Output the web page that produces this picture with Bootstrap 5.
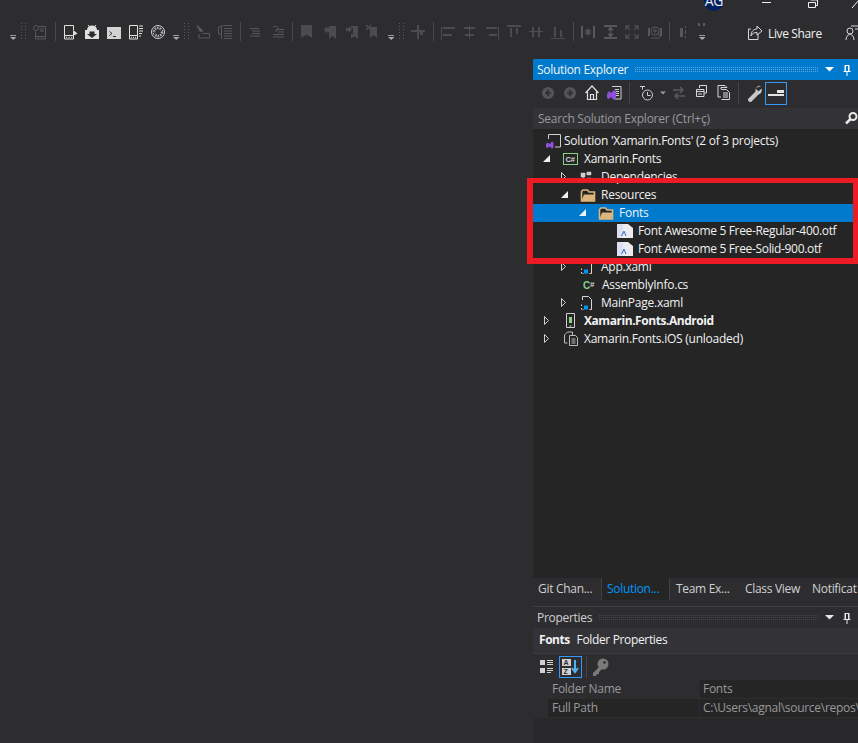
<!DOCTYPE html>
<html lang="en"><head><meta charset="utf-8"><title>Solution Explorer</title>
<link href="https://cdn.jsdelivr.net/npm/bootstrap@5.3.0/dist/css/bootstrap.min.css" rel="stylesheet">
<style>
html,body{height:100%;margin:0;background:#2d2d30;overflow:hidden}
body{font-family:"Open Sans","Liberation Sans",sans-serif;font-size:12px;color:#f1f1f1;line-height:18px}
.ide-shell{width:858px;height:743px;position:relative;overflow:hidden}
.cap-bar{height:12px;overflow:hidden}
.avatar-dot{width:20px;height:20px;border-radius:50%;background:#002060;margin-top:-9px;margin-left:704px;font-size:14px;line-height:20px;text-align:center;color:#e8e8e8;flex:none;letter-spacing:-.3px;white-space:nowrap}
.win-glyph{display:block;flex:none}
.tool-strip{height:47px;padding-top:13px;padding-left:10px}
.tool-strip svg{display:block;flex:none;overflow:visible}
.share-text{font-size:12px;color:#f1f1f1;line-height:16px;margin-top:1px;width:78px;flex:none;letter-spacing:-.36px}
.main-split{height:684px}
.editor-void{width:533px;flex:none}
.side-col{width:325px;flex:none;min-width:0}
.title-blue{height:21px;background:#007acc;color:#f4f4f4;padding-left:4px}
.title-label{line-height:21px;white-space:nowrap;letter-spacing:-.3px}
.grip-dots{height:5px;flex:1;margin:0 7px 0 7px;background-image:radial-gradient(circle at .5px .5px,#59a8df 0.6px,transparent .7px);background-size:2px 2px}
.grip-gray{background-image:radial-gradient(circle at .5px .5px,#46464a .6px,transparent .7px)}
.se-tools{height:27px;padding-left:9px}
.se-tools svg{display:block;flex:none}
.tool-sep{width:1px;height:22px;background:#46464a;flex:none}
.sel-btn{width:22px;height:23px;border:1px solid #3399ff;flex:none;display:flex;align-items:center;justify-content:center}
.search-bar{height:21px;margin-top:1px;background:#333337;color:#999;padding-left:5px;line-height:21px;letter-spacing:-.25px}
.tree-pane{height:450px;background:#252526;padding-top:3px}
.tree-row{height:18px;line-height:18px;white-space:nowrap;color:#f1f1f1;display:flex;align-items:center;letter-spacing:-.25px}
.tree-row.is-sel{background:#007acc}
.tree-row.is-bold{font-weight:700;letter-spacing:-.45px}
.tree-row.is-tight{letter-spacing:-.33px}
.ic{width:18px;height:16px;flex:none;display:block}
.red-frame{position:absolute;left:527px;top:178px;width:332px;height:86px;border:6px solid #ed1c24;border-top-width:5px;pointer-events:none}
.tab-strip{height:22px;background:#2d2d30}
.tab-item{padding:0 0 0 5px;line-height:21px;color:#d0d0d0;white-space:nowrap;height:22px;letter-spacing:-.3px;flex:none}
.tab-on{background:#252526;color:#0097fb;border:1px solid #3f3f46;border-bottom:0;border-top:0}
.prop-wrap{border-top:1px solid #3f3f46;margin-top:6px;height:137px;background:#29292b}
.prop-title{height:21px;color:#d0d0d0;padding-left:4px;background:#2d2d30}
.prop-head{height:25px;background:#333337;padding-left:6px;line-height:23px;color:#f1f1f1;white-space:nowrap;letter-spacing:-.35px}
.prop-head b{font-weight:700;margin-right:4px;letter-spacing:-.45px}
.prop-tools{height:27px;padding-left:6px;background:#2d2d30;border-top:1px solid #3a3a3e}
.prop-tools svg{display:block;flex:none}
.grid-row{height:19px;line-height:18px;color:#999;white-space:nowrap;overflow:hidden;border-bottom:1px solid #2d2d30;letter-spacing:-.28px}
.gutter{width:15px;flex:none;background:#2d2d30}
.name-cell{width:151px;flex:none;padding-left:4px}
.name-lite{background:#2d2d30}
.name-dark{background:#252526}
.val-cell{flex:1;padding-left:3px;border-left:1px solid #2d2d30;background:#252526}
</style></head>
<body>
<svg width="0" height="0" class="position-absolute">
<defs>
<g id="g-open"><path d="M1.500 14V4.500l1.500-1.500h4.500l1.500 2h5.500v9z" fill="#252526" stroke="#dcb67a" stroke-width="1.600"/><path d="M1.500 14 4 7.500h11l-1.500 6.500z" fill="#dcb67a"/></g>
<g id="g-fa"><path d="M0 1h11l5 4v10H0z" fill="#ececf0"/><path d="M0 1h6v14H0z" fill="#d5dcef" opacity=".7"/><path d="M4 13l2.500-5h1l2 5h-1l-1.500-3.500L5 13z" fill="#3d6fc4"/></g>
<g id="g-xaml"><path d="M3.500 5V1.500h6l3 3V14.500h-2M3.500 14.500h1" fill="none" stroke="#d8d8d8"/><path d="M5 10.500h4v4H5z" fill="#0097fb"/><path d="M2.500 9.500v1.500M2.500 13v1.500" stroke="#d8d8d8"/></g>
<g id="g-tri-o"><path d="M0.500 0.500 4.500 4.500 0.500 8.500z" fill="none" stroke="#d0d0d0"/></g>
<g id="g-tri-f"><path d="M7 0V7H0z" fill="#f1f1f1"/></g>
<g id="g-drop"><path d="M0 10.500H6" stroke="#9a9a9a"/><path d="M0 12h6.500L3.250 15z" fill="#a8a8a8"/></g>
<g id="g-grip"><path d="M.5 -2V16M4.500 -2V16" stroke="#5a5a5e" stroke-dasharray="1 2"/></g>
<g id="g-vline"><path d="M.5 -3V16" stroke="#4a4a4e"/></g>
</defs></svg>
<div class="ide-shell">
  <div class="cap-bar d-flex">
    <div class="avatar-dot">AG</div>
    <svg class="win-glyph" width="134" height="12"><path d="M38 2.500H47" stroke="#f1f1f1"/><path d="M86.500 0h7v5.500h-2" fill="none" stroke="#f1f1f1"/><path d="M84.500 2.500h7v5h-7z" fill="none" stroke="#f1f1f1"/><path d="M128 8 134 1" stroke="#f1f1f1" fill="none"/></svg>
  </div>
  <div class="tool-strip d-flex">
    <svg width="11" height="20"><use href="#g-drop"/></svg>
    <svg width="12" height="20"><use href="#g-grip"/></svg>
    <svg width="22" height="20" fill="none" stroke="#58585c"><path d="M2.500 6.500v7.500h10V1.500H6M2.500 11.500h10M5 12.800h1M8 12.800h1"/><circle cx="3" cy="3" r="2.500"/><path d="M7 4h4M7 6h4"/></svg>
    <svg width="9" height="20"><use href="#g-vline"/></svg>
    <svg width="21" height="20" fill="none" stroke="#e0e0e0"><path d="M9.500 5V.5H.5v13.500h9V11M.5 10.500h9M2 12.300h1.200M4.500 12.300h1.200M7 12.300h1.200"/><path d="M9 5l4.500 3.500L9 11z" fill="#e0e0e0" stroke="none"/></svg>
    <svg width="22" height="20"><path d="M0 5h14v9H0z" fill="#e0e0e0"/><path d="M2 5a5 4.500 0 0 1 10 0z" fill="#e0e0e0"/><path d="M3 0l1.500 2M11 0 9.500 2" stroke="#e0e0e0"/><path d="M4.500 6.500h5v2.500h2.500L7 13 2 9h2.500z" fill="#2d2d30"/></svg>
    <svg width="22" height="20"><path d="M0 2h14v12H0z" fill="#d2d2d2"/><path d="M2.500 6.500 5 8.500l-2.500 2M6 11.500h3" fill="none" stroke="#2d2d30"/></svg>
    <svg width="22" height="20" fill="none" stroke="#e0e0e0"><path d="M.5.500h8v13.500h-8zM.5 10.500h8"/><path d="M2 12.300h1M4 12.300h1M6 12.300h1"/><path d="M10 1h4M10 3.500h4M10 6h4M10 8.500h3M10 11h2" stroke-width="1.200"/></svg>
    <svg width="22" height="20" fill="none" stroke="#d2d2d2"><circle cx="7" cy="7" r="6.500"/><circle cx="7" cy="7" r="4" stroke-width="2.500" stroke-dasharray="1.500 1" stroke="#b0b0b0"/><path d="M3 9l3-3 2 2 3-3" stroke="#2d2d30"/></svg>
    <svg width="11" height="20"><use href="#g-drop"/></svg>
    <svg width="13" height="20"><use href="#g-grip"/></svg>
    <svg width="21" height="20" fill="none" stroke="#58585c"><path d="M0 0l6 6-3 .500z" fill="#58585c"/><path d="M5 8.500h7.500v4.500H2V9"/></svg>
    <svg width="22" height="20" fill="none" stroke="#58585c"><path d="M3.500 2H.5v7h3M3.500 0v14M5 .5h9M6 3.500h8M6 6h8M6 8.500h8M6 11h8M6 13.500h8"/></svg>
    <svg width="10" height="20"><use href="#g-vline"/></svg>
    <svg width="22" height="20" stroke="#58585c"><path d="M0 3.500h9M2 6h8M2 8.500h8M0 11h10"/></svg>
    <svg width="20" height="20" fill="none" stroke="#58585c"><path d="M1 2.500a2.500 2 0 1 1 3 2.500v2M5 4.500h7M6 7h6M1 9.500h11M1 12h11"/></svg>
    <svg width="9" height="20"><use href="#g-vline"/></svg>
    <svg width="23" height="20"><path d="M0 0h11v13L5.500 9.500 0 13z" fill="#4c4c50"/></svg>
    <svg width="22" height="20"><path d="M5 1h7v13l-3.500-3L5 14V7H3v2L0 4.500 3 1v2h2z" fill="#4c4c50"/></svg>
    <svg width="20" height="20"><path d="M0 3h3V1l3 3.500L3 8V6H0zM5 1h7v13l-3.500-3L5 14V9h2V3H5z" fill="#4c4c50"/></svg>
    <svg width="22" height="20"><path d="M4 2h7v11l-3.500-3L4 13z" fill="#4c4c50"/><path d="M0 0l5 5M5 0 0 5" stroke="#4c4c50" stroke-width="1.500"/></svg>
    <svg width="11" height="20"><use href="#g-drop"/></svg>
    <svg width="12" height="20"><use href="#g-grip"/></svg>
    <svg width="22" height="20"><path d="M0 5h14v2H0zM6 0h2v14H6zM9 7h3v3H9z" fill="#4c4c50"/></svg>
    <svg width="8" height="20"><use href="#g-vline"/></svg>
    <svg width="23" height="20" fill="#4c4c50"><path d="M0 2h1v13H0zM2 2h12v2H2zM2 9h9v2H2z"/></svg>
    <svg width="22" height="20" fill="#4c4c50"><path d="M5 0h1v14H5zM0 2h11v2H0zM1 9h9v2H1z"/></svg>
    <svg width="21" height="20" fill="#4c4c50"><path d="M12 2h1v13h-1zM0 2h11v2H0zM3 9h8v2H3z"/></svg>
    <svg width="22" height="20" fill="#4c4c50"><path d="M0 0h14v2H0zM3 3h2v9H3zM9 3h2v6H9z"/></svg>
    <svg width="22" height="20" fill="#4c4c50"><path d="M0 6h14v1H0zM3 2h2v10H3zM9 2h2v10H9z"/></svg>
    <svg width="22" height="20" fill="#4c4c50"><path d="M0 13h14v1H0zM3 2h2v10H3zM9 5h2v7H9z"/></svg>
    <svg width="8" height="20"><use href="#g-vline"/></svg>
    <svg width="23" height="20" fill="none" stroke="#58585c"><path d="M1 1v12M13 1v12" stroke-width="2"/><path d="M7 3.500v7M4 5l6 4M10 5 4 9" stroke-width="1.500"/></svg>
    <svg width="21" height="20" fill="none" stroke="#58585c"><path d="M0 1h13M0 13h13" stroke-width="2"/><path d="M6.500 2v10"/><path d="M4 5l2.500-3L9 5zM4 9l2.500 3L9 9z" fill="#58585c"/></svg>
    <svg width="23" height="20" fill="none" stroke="#4c4c50" stroke-width="1.500"><path d="M1 5V1h4M9 1h4v4M13 9v4H9M5 13H1V9M2 2l3 3M12 2 9 5M2 12l3-3M12 12 9 9"/></svg>
    <svg width="21" height="20" fill="none" stroke="#58585c"><path d="M1 3v8M13 3v8" stroke-width="2"/><circle cx="7" cy="6" r="4"/><path d="M3 13h9M10 9l3 3M5 6h4M7 4v4"/></svg>
    <svg width="10" height="20"><use href="#g-vline"/></svg>
    <svg width="19" height="20" fill="#58585c"><path d="M1 3h3v9H1zM6 1h1v2H6zM6 5h1v4H6zM6 11h1v2H6z"/></svg>
    <svg width="50" height="20"><path d="M1 -2v3M6 -2v3" stroke="#8a8a8a"/><path d="M1 10.500H7" stroke="#9a9a9a"/><path d="M1 12h6.500L4.250 15z" fill="#a8a8a8"/></svg>
    <svg width="20" height="20" fill="none" stroke="#d8d8d8"><path d="M10 9v5.500H.5V4H3"/><path d="M3 11c0-5 3-7 6-7V1l5 5-5 4V7.500c-3 0-5 1-6 3.500z"/></svg>
    <span class="share-text">Live Share</span>
    <svg width="14" height="20" fill="none" stroke="#d8d8d8"><circle cx="4" cy="6" r="3"/><path d="M0 15c0-3 1.500-5 4-6 2.500 1 4 3 4 6M5 1h8M9 4h5"/></svg>
  </div>
  <div class="main-split d-flex">
    <div class="editor-void"></div>
    <div class="side-col d-flex flex-column">
      <div class="title-blue d-flex align-items-center">
        <span class="title-label">Solution Explorer</span>
        <span class="grip-dots"></span>
        <svg width="33" height="12" viewBox="0 0 33 12" class="flex-none"><path d="M0 3h9L4.500 7.500z" fill="#fff"/><path d="M19.500 1h5v6h1v1h-3v4h-1V8h-3V7h1z" fill="#fff"/><path d="M21 2h2v5h-2z" fill="#007acc"/><path d="M23 2h1v5h-1z" fill="#fff"/></svg>
      </div>
      <div class="se-tools d-flex align-items-center">
        <svg width="22" height="22" viewBox="0 0 22 22"><circle cx="6" cy="11" r="6" fill="#555558"/><path d="M7 8 4 11l3 3M4 11h5" stroke="#2d2d30" fill="none" stroke-width="1.500"/></svg>
        <svg width="21" height="22" viewBox="0 0 21 22"><circle cx="6" cy="11" r="6" fill="#555558"/><path d="M5 8l3 3-3 3M3 11h5" stroke="#2d2d30" fill="none" stroke-width="1.500"/></svg>
        <svg width="22" height="22" viewBox="0 0 22 22" fill="none" stroke="#e0e0e0" stroke-width="1.200"><path d="M.5 11 7 4l6.500 7M2.500 9.500v8h9v-8M5.500 17.500V12.500h3v5"/></svg>
        <svg width="22" height="22" viewBox="0 0 22 22"><path d="M5 4.500h9V17H8" fill="none" stroke="#d0d0d0"/><path d="M8 7.500h4M8 9.500h4M8 11.500h4M8 13.500h4" stroke="#d0d0d0"/><path d="M0 12v4l2 1 2-2 3 3 2-1V9L7 8l-3 3-2-2z" fill="#8f4fd8"/></svg>
        <div class="tool-sep me-2 pe-0"></div>
        <svg width="0" height="0"/>
        <svg width="2" height="22"/>
        <svg width="20" height="22" viewBox="0 0 20 22" fill="none" stroke="#d0d0d0"><path d="M0 4.500h5M2.500 4.500v3"/><circle cx="7.500" cy="13" r="5"/><path d="M7.500 10v3.500h3"/></svg>
        <svg width="13" height="22" viewBox="0 0 13 22"><path d="M0 9.500h6L3 12.500z" fill="#9a9a9a"/></svg>
        <svg width="23" height="22" viewBox="0 0 23 22" fill="none" stroke="#5a5a5e" stroke-width="1.500"><path d="M0 8h10M7 5l3 3-3 3M12 14H2M5 11l-3 3 3 3"/></svg>
        <svg width="20" height="22" viewBox="0 0 20 22" fill="none" stroke="#d8d8d8"><path d="M3.500 6V3.500h7V11H8"/><path d="M.5 7.500h7.500v7H.5zM.5 9.500h7.500"/><path d="M2 12h4"/></svg>
        <svg width="22" height="22" viewBox="0 0 22 22" fill="none" stroke="#d8d8d8"><path d="M2 7V3.500h7l2 2H5v2"/><path d="M5.500 7.500h5l3 3v7h-8M2 7v8h3"/><path d="M7 11h5M7 13h5M7 15h5"/></svg>
        <div class="tool-sep me-2"></div>
        <svg width="18" height="22" viewBox="0 0 18 22"><path d="M14 4a4.500 4.500 0 0 0-5.500 5.500L1 17v1.500L2.500 20H4l7.500-7.500A4.500 4.500 0 0 0 14.500 6.500L12 9l-2.500-1L9 6z" fill="#c8c8c8"/></svg>
        <div class="sel-btn"><svg width="16" height="8" viewBox="0 0 16 8"><path d="M0 5h16v2H0zM9 1h7v3H9z" fill="#e4e4e4"/></svg></div>
      </div>
      <div class="search-bar d-flex justify-content-between">
        <span>Search Solution Explorer (Ctrl+ç)</span>
        <svg width="13" height="21" viewBox="0 0 13 21" class="flex-none"><circle cx="8" cy="8.500" r="3.500" fill="none" stroke="#e8e8e8" stroke-width="2"/><path d="M5.500 11 1 15.500" stroke="#e8e8e8" stroke-width="2.500"/></svg>
      </div>
      <div class="tree-pane">
        <div class="tree-row" style="padding-left:13px"><svg class="ic me-0" viewBox="0 0 18 16" style="margin-right:2px"><path d="M2.500 6V1.500h12V14H9" fill="none" stroke="#d0d0d0"/><path d="M0 11v3l1.500 1 2-1.500 2.500 2 1.500-1V9.500L6 8.500 3.500 11l-2-1.500z" fill="#8f4fd8"/></svg><span class="ms-0" style="margin-left:2px">Solution 'Xamarin.Fonts' (2 of 3 projects)</span></div>
        <div class="tree-row" style="padding-left:10px"><svg width="7" height="7" class="flex-none" style="margin-right:13px"><use href="#g-tri-f"/></svg><svg class="ic" viewBox="0 0 18 16" style="margin-right:3px"><rect x=".5" y="2.500" width="14" height="11" fill="none" stroke="#89d185"/><text x="2.500" y="11" font-size="7.500" font-family="Liberation Sans" fill="#d8d8d8" font-weight="700">C#</text></svg>Xamarin.Fonts</div>
        <div class="tree-row" style="padding-left:28px"><svg width="5" height="9" class="flex-none" style="margin-right:13px"><use href="#g-tri-o"/></svg><svg class="ic" viewBox="0 0 18 16" style="margin-right:4px"><path d="M2 4h4v4H2zM8 3h4v3H8zM8 9h4v3H8zM6 5h2M4 8v3h4" fill="#d0d0d0" stroke="#d0d0d0" stroke-width=".5"/></svg>Dependencies</div>
        <div class="tree-row" style="padding-left:28px"><svg width="7" height="7" class="flex-none" style="margin-right:12px"><use href="#g-tri-f"/></svg><svg class="ic" viewBox="0 0 18 16" style="margin-right:2px"><use href="#g-open"/></svg><span style="margin-left:1px">Resources</span></div>
        <div class="tree-row is-sel" style="padding-left:46px"><svg width="7" height="7" class="flex-none" style="margin-right:12px"><use href="#g-tri-f"/></svg><svg class="ic" viewBox="0 0 18 16" style="margin-right:2px"><use href="#g-open"/></svg><span style="margin-left:1px">Fonts</span></div>
        <div class="tree-row is-tight" style="padding-left:84px"><svg class="ic" viewBox="0 0 18 16" style="margin-right:3px"><use href="#g-fa"/></svg>Font Awesome 5 Free-Regular-400.otf</div>
        <div class="tree-row is-tight" style="padding-left:84px"><svg class="ic" viewBox="0 0 18 16" style="margin-right:3px"><use href="#g-fa"/></svg>Font Awesome 5 Free-Solid-900.otf</div>
        <div class="tree-row" style="padding-left:28px"><svg width="5" height="9" class="flex-none" style="margin-right:13px"><use href="#g-tri-o"/></svg><svg class="ic" viewBox="0 0 18 16" style="margin-right:4px"><use href="#g-xaml"/></svg>App.xaml</div>
        <div class="tree-row" style="padding-left:50px"><svg class="ic" viewBox="0 0 18 16" style="margin-right:1px"><text x="0" y="12" font-size="10" font-family="Liberation Sans" fill="#89d185" font-weight="700">C</text><text x="7" y="10" font-size="8" font-family="Liberation Sans" fill="#d8d8d8" font-weight="700">#</text></svg>AssemblyInfo.cs</div>
        <div class="tree-row" style="padding-left:28px"><svg width="5" height="9" class="flex-none" style="margin-right:13px"><use href="#g-tri-o"/></svg><svg class="ic" viewBox="0 0 18 16" style="margin-right:4px"><use href="#g-xaml"/></svg>MainPage.xaml</div>
        <div class="tree-row is-bold" style="padding-left:11px"><svg width="5" height="9" class="flex-none" style="margin-right:14px"><use href="#g-tri-o"/></svg><svg class="ic" viewBox="0 0 18 16" style="margin-right:3px"><path d="M3.500 .500h8v14h-8z" fill="none" stroke="#d0d0d0"/><path d="M5 3h5v8H5z" fill="#2a2a2a"/><path d="M6 4h3v6H6z" fill="#89d185"/><path d="M6.500 13h2" stroke="#d0d0d0"/></svg>Xamarin.Fonts.Android</div>
        <div class="tree-row" style="padding-left:11px"><svg width="5" height="9" class="flex-none" style="margin-right:14px"><use href="#g-tri-o"/></svg><svg class="ic" viewBox="0 0 18 16" style="margin-right:3px"><path d="M4.500 12H1.500V4l3-3h5v3M6.500 4.500h6l2 2v8h-8z" fill="none" stroke="#bdbdbd"/><path d="M8.500 8h4M8.500 10h4M8.500 12h4" stroke="#bdbdbd"/></svg>Xamarin.Fonts.iOS (unloaded)</div>
      </div>
      <div class="tab-strip d-flex">
        <div class="tab-item" style="width:68px">Git Chan...</div>
        <div class="tab-item tab-on" style="width:69px">Solution...</div>
        <div class="tab-item" style="padding-left:6px;width:75px">Team Ex...</div>
        <div class="tab-item" style="width:60px;padding-left:0">Class View</div>
        <div class="tab-item ps-0" style="margin-left:7px">Notificat</div>
      </div>
      <div class="prop-wrap">
        <div class="prop-title d-flex align-items-center">
          <span class="title-label">Properties</span>
          <span class="grip-dots grip-gray"></span>
          <svg width="33" height="12" viewBox="0 0 33 12" class="flex-none"><path d="M0 3h9L4.500 7.500z" fill="#e8e8e8"/><path d="M19.500 1h5v6h1v1h-3v4h-1V8h-3V7h1z" fill="#e8e8e8"/><path d="M21 2h2v5h-2z" fill="#2d2d30"/></svg>
        </div>
        <div class="prop-head"><b>Fonts</b> Folder Properties</div>
        <div class="prop-tools d-flex align-items-center">
          <svg width="20" height="22" viewBox="0 0 20 22" fill="#d0d0d0"><path d="M1 4h5v5H1zM1 12h5v5H1zM8 4h6v1H8zM8 6h6v1H8zM8 8h6v1H8zM8 12h6v1H8zM8 14h6v1H8zM8 16h4v1H8z"/></svg>
          <div class="sel-btn" style="width:23px;height:22px"><svg width="19" height="18" viewBox="0 0 19 18"><path d="M1 1h9v7H1zM1 10h9v7H1z" fill="#d0d0d0"/><text x="2.500" y="7.200" font-size="7" font-weight="700" font-family="Liberation Sans" fill="#2d2d30">A</text><text x="2.500" y="16" font-size="7" font-weight="700" font-family="Liberation Sans" fill="#2d2d30">Z</text><path d="M14 2v11M11 10l3 4 3-4" fill="none" stroke="#4fb3f5" stroke-width="2"/></svg></div>
          <div class="tool-sep mx-1"></div>
          <svg width="20" height="20" viewBox="0 0 20 20"><circle cx="12" cy="7" r="5.500" fill="#7a7a7a"/><path d="M9 9 2 16v3h3l1-2h2v-2l4-4z" fill="#7a7a7a"/><circle cx="13.500" cy="5.500" r="1.300" fill="#2d2d30"/></svg>
        </div>
        <div class="grid-row d-flex"><div class="gutter"></div><div class="name-cell name-lite">Folder Name</div><div class="val-cell">Fonts</div></div>
        <div class="grid-row d-flex"><div class="gutter"></div><div class="name-cell name-dark">Full Path</div><div class="val-cell">C:\Users\agnal\source\repos\</div></div>
      </div>
    </div>
  </div>
  <div class="red-frame"></div>
</div>
</body></html>
